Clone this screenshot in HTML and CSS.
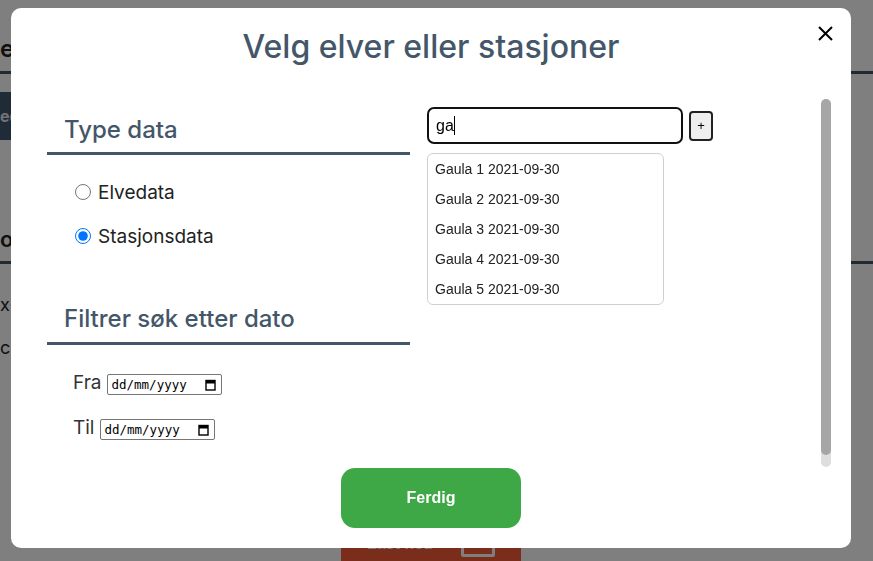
FILE: index.html
```html
<!DOCTYPE html>
<html lang="no">
<head>
<meta charset="utf-8">
<title>Velg elver eller stasjoner</title>
<link rel="stylesheet" href="styles.css">
</head>
<body>
<div class="page">
  <header class="page-head"><h1 class="page-title">elv</h1></header>
  <div class="toolbar"><span class="tool-btn">edit</span></div>
  <section class="sec">
    <h2 class="sec-title">ord</h2>
    <p class="sec-line">x-y</p>
    <p class="sec-line">csv</p>
  </section>
  <div class="page-actions"><span class="red-btn">Last ned <span class="icon-box"></span></span></div>
</div>

<div class="overlay">
  <div class="modal">
    <button class="close-btn" aria-label="Lukk">
      <svg width="15" height="15" viewBox="0 0 15 15"><path d="M1 1 L14 14 M14 1 L1 14" stroke="#000" stroke-width="2" fill="none"/></svg>
    </button>
    <h1 class="modal-title">Velg elver eller stasjoner</h1>
    <div class="modal-body">
      <div class="col-left">
        <h2 class="sec-head">Type data</h2>
        <div class="radio-list">
          <label class="radio-row"><input type="radio" name="type"> <span>Elvedata</span></label>
          <label class="radio-row"><input type="radio" name="type" checked> <span>Stasjonsdata</span></label>
        </div>
        <h2 class="sec-head sec-head-2">Filtrer søk etter dato</h2>
        <div class="date-list">
          <div class="date-row"><span class="date-label">Fra</span><span class="date-field"><span>dd/mm/yyyy</span><svg class="cal" width="11" height="12" viewBox="0 0 11 12"><rect x="1" y="1.5" width="9" height="9.5" fill="none" stroke="#000" stroke-width="1.4"/><rect x="1" y="1.5" width="9" height="3" fill="#000"/></svg></span></div>
          <div class="date-row"><span class="date-label">Til</span><span class="date-field"><span>dd/mm/yyyy</span><svg class="cal" width="11" height="12" viewBox="0 0 11 12"><rect x="1" y="1.5" width="9" height="9.5" fill="none" stroke="#000" stroke-width="1.4"/><rect x="1" y="1.5" width="9" height="3" fill="#000"/></svg></span></div>
        </div>
      </div>
      <div class="col-right">
        <div class="search-row">
          <div class="search-input">ga<span class="caret"></span></div>
          <button class="add-btn">+</button>
        </div>
        <ul class="suggest">
          <li>Gaula 1 2021-09-30</li>
          <li>Gaula 2 2021-09-30</li>
          <li>Gaula 3 2021-09-30</li>
          <li>Gaula 4 2021-09-30</li>
          <li>Gaula 5 2021-09-30</li>
        </ul>
      </div>
      <div class="scroll-track"><div class="scroll-thumb"></div></div>
    </div>
    <div class="modal-foot"><button class="done-btn">Ferdig</button></div>
  </div>
</div>
</body>
</html>
```
FILE: styles.css
```css
html, body { margin: 0; padding: 0; }
body { background: #fff; font-family: Inter, "Noto Sans", sans-serif; width: 873px; height: 561px; overflow: hidden; }

/* background page */
.page { color: #222; }
.page-head { height: 71px; border-bottom: 3px solid #435566; }
.page-title { margin: 0; padding-top: 34px; font-size: 24px; line-height: 29px; font-weight: 600; }
.toolbar { margin-top: 18px; }
.tool-btn { display: block; width: 300px; height: 48px; line-height: 48px; background: #405670; color: #e6e6e6; font-weight: 700; font-size: 16px; }
.sec { margin-top: 86px; }
.sec-title { margin: 0; font-size: 22px; line-height: 27px; font-weight: 600; padding-bottom: 8px; border-bottom: 3px solid #435566; }
.sec-line { margin: 0; font-size: 18px; line-height: 22px; }
.sec-line:first-of-type { margin-top: 30px; }
.sec-line + .sec-line { margin-top: 21px; }
.page-actions { margin-top: 155px; padding-left: 341px; }
.red-btn { display: flex; align-items: center; justify-content: center; gap: 28px; width: 180px; height: 60px; border-radius: 14px; background: #f45a34; color: #fff; font-family: "Liberation Sans", Arial, sans-serif; font-weight: 700; font-size: 16px; }
.icon-box { width: 28px; height: 20px; border: 3px solid #fff; border-radius: 2px; }

/* overlay + modal */
.overlay { position: fixed; inset: 0; background: rgba(0,0,0,0.5); }
.modal { position: absolute; left: 11px; top: 8px; width: 840px; height: 540px; background: #fff; border-radius: 10px; box-sizing: border-box; display: flex; flex-direction: column; }
.close-btn { position: absolute; top: 18px; right: 18px; width: 15px; height: 15px; padding: 0; border: 0; background: none; display: block; cursor: pointer; }
.close-btn svg { display: block; }
.modal-title { margin: 19px 0 0; text-align: center; font-size: 32px; line-height: 39px; font-weight: 500; color: #44576a; }

.modal-body { display: flex; margin-top: 33px; padding: 0 20px 0 36px; height: 368px; }
.col-left { width: 363px; flex: none; }
.sec-head { margin: 16px 0 0; padding: 0 0 8px 17px; font-size: 24px; line-height: 29px; font-weight: 500; color: #44576a; border-bottom: 3px solid #44576a; }
.sec-head-2 { margin-top: 46px; padding-bottom: 9px; }
.radio-list { margin-top: 15px; padding-left: 28px; }
.radio-row { display: flex; align-items: center; height: 44px; font-size: 19px; color: #222; gap: 7px; }
.radio-row input { width: 16px; height: 16px; margin: 0; }
.date-list { padding-left: 26px; margin-top: 27px; }
.date-row { display: flex; align-items: baseline; gap: 6px; font-size: 19px; color: #333; height: 21px; }
.date-label { line-height: 21px; }
.date-row + .date-row { margin-top: 24px; }
.date-field { display: inline-flex; align-items: center; justify-content: space-between; width: 115px; height: 21px; box-sizing: border-box; border: 1px solid #767676; border-radius: 2px; padding: 0 5px 0 3px; font-family: "DejaVu Sans Mono", "Liberation Mono", monospace; font-size: 12.5px; color: #000; background: #fff; }
.cal { display: block; }

.col-right { margin-left: 17px; flex: 1; }
.search-row { display: flex; align-items: center; margin-top: 8px; }
.search-input { width: 256px; height: 37px; box-sizing: border-box; border: 2px solid #111; border-radius: 7px; padding: 0 7px; font-family: "Liberation Sans", Arial, sans-serif; font-size: 16px; line-height: 33px; color: #000; display: flex; align-items: center; }
.caret { display: inline-block; width: 1px; height: 19px; background: #000; }
.add-btn { margin-left: 6px; width: 24px; height: 30px; box-sizing: border-box; border: 2px solid #222; border-radius: 4px; background: #efefef; padding: 0; font-family: "Liberation Sans", Arial, sans-serif; font-size: 13px; color: #000; }
.suggest { list-style: none; margin: 9px 0 0; padding: 0; width: 237px; box-sizing: border-box; border: 1px solid #cfcfcf; border-radius: 6px; }
.suggest li { height: 30px; line-height: 30px; padding: 0 7px; font-family: "Liberation Sans", Arial, sans-serif; font-size: 14px; color: #222; }

.scroll-track { width: 10px; height: 368px; background: #dedede; border-radius: 5px; flex: none; }
.scroll-thumb { height: 356px; background: #a6a6a6; border-radius: 5px; }

.modal-foot { display: flex; justify-content: center; padding-top: 1px; }
.done-btn { width: 180px; height: 60px; border: 0; border-radius: 14px; background: #3fa846; color: #fff; font-family: "Liberation Sans", Arial, sans-serif; font-weight: 700; font-size: 16px; }
```
